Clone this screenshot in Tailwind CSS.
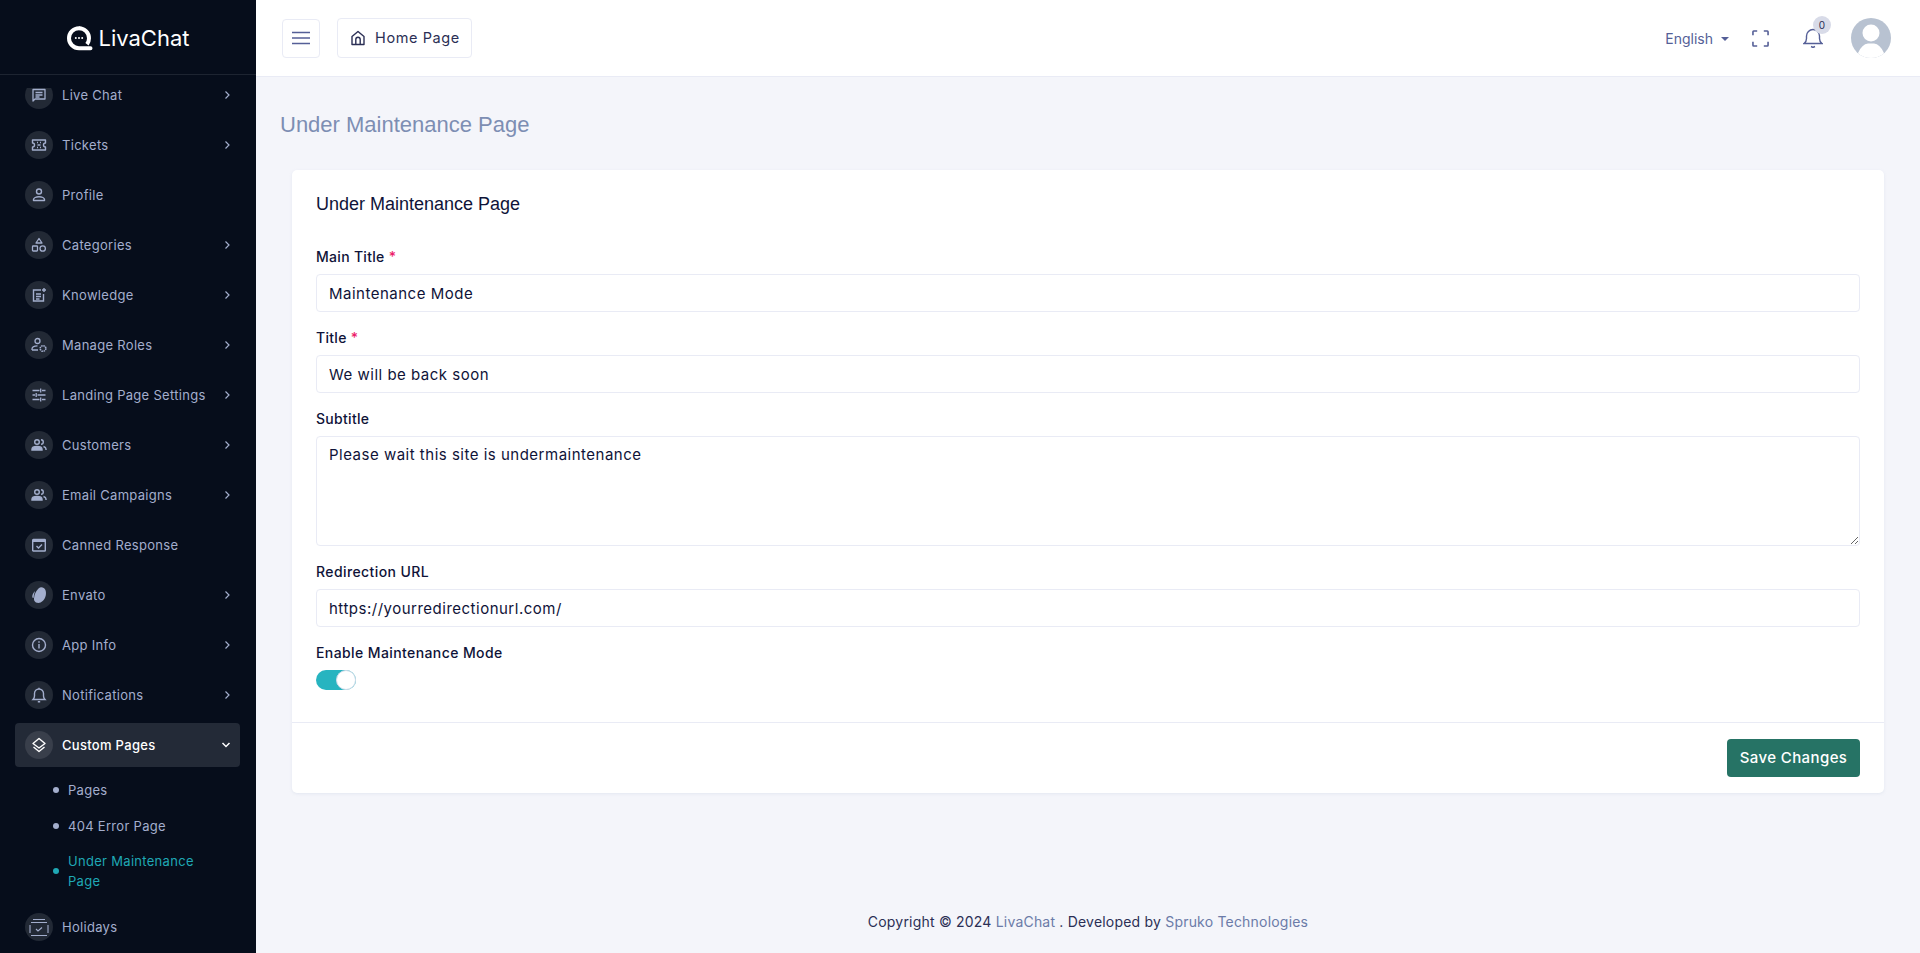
<!doctype html>
<html lang="en">
<head>
<meta charset="utf-8">
<title>Under Maintenance Page</title>
<script src="https://cdn.jsdelivr.net/npm/@tailwindcss/browser@4"></script>
</head>
<body class="font-['Inter',sans-serif] bg-[#f4f5fa] text-[#0f1338]">
<div class="flex h-[953px] w-[1920px] overflow-hidden">

  <aside class="flex h-full w-[256px] shrink-0 flex-col bg-[#060d1b]">
    <div class="flex h-[75px] shrink-0 items-center justify-center gap-[5px] border-b border-[#1d2431] pt-[2px] text-white">
      <svg width="27" height="27" viewBox="0 0 27 27"><path d="M13 3.2a10 10 0 1 0 0 20h11.5" fill="none" stroke="#fff" stroke-width="4" stroke-linecap="round"/><path d="M13 3.2a10 10 0 0 1 10 10 10 10 0 0 1-2 6" fill="none" stroke="#fff" stroke-width="4"/><circle cx="9.8" cy="13" r="1" fill="#fff"/><circle cx="13" cy="13" r="1" fill="#fff"/><circle cx="16.2" cy="13" r="1" fill="#fff"/></svg>
      <span class="text-[22px] font-normal">LivaChat</span>
    </div>
    <nav class="mt-[13px] flex min-h-0 flex-1 flex-col gap-[6px] overflow-hidden pl-[15px] pr-[16px] text-[13px] leading-none tracking-[0.3px] text-[#a3aecd]">
      <a class="-mt-[15px] flex h-[44px] shrink-0 items-center pl-[10px] pr-[9px]"><span class="mr-[9px] flex h-[28px] w-[28px] items-center justify-center rounded-full bg-[#222935]"><svg width="16" height="16" viewBox="0 0 16 16" fill="none" stroke="#a3aecd" stroke-width="1.3"><path d="M2 2.5h12v9.5H4l-2 2z" stroke-linejoin="round"/><path d="M4.5 5.5h7M4.5 8h7M4.5 10h4"/></svg></span><span class="flex-1">Live Chat</span><svg width="8" height="10" viewBox="0 0 8 10" fill="none" stroke="#a3aecd" stroke-width="1.2"><path d="M2.5 1.5L6 5l-3.500 3.500"/></svg></a>
      <a class="flex h-[44px] shrink-0 items-center pl-[10px] pr-[9px]"><span class="mr-[9px] flex h-[28px] w-[28px] items-center justify-center rounded-full bg-[#222935]"><svg width="16" height="16" viewBox="0 0 16 16" fill="none" stroke="#a3aecd" stroke-width="1.4"><path d="M1.500 3h13v3a2 2 0 0 0 0 4v3h-13v-3a2 2 0 0 0 0-4z" stroke-linejoin="round"/><path d="M6 5.500h1M9 5.500h1M6.500 8h3M6 10.500h1M9 10.500h1"/></svg></span><span class="flex-1">Tickets</span><svg width="8" height="10" viewBox="0 0 8 10" fill="none" stroke="#a3aecd" stroke-width="1.2"><path d="M2.5 1.5L6 5l-3.500 3.500"/></svg></a>
      <a class="flex h-[44px] shrink-0 items-center pl-[10px] pr-[9px]"><span class="mr-[9px] flex h-[28px] w-[28px] items-center justify-center rounded-full bg-[#222935]"><svg width="16" height="16" viewBox="0 0 16 16" fill="none" stroke="#a3aecd" stroke-width="1.4"><circle cx="8" cy="4.500" r="2.500"/><path d="M2.500 13.500v-1c0-1.500 2.500-2.800 5.500-2.800s5.500 1.300 5.500 2.800v1z" stroke-linejoin="round"/></svg></span><span class="flex-1">Profile</span></a>
      <a class="flex h-[44px] shrink-0 items-center pl-[10px] pr-[9px]"><span class="mr-[9px] flex h-[28px] w-[28px] items-center justify-center rounded-full bg-[#222935]"><svg width="16" height="16" viewBox="0 0 16 16" fill="none" stroke="#a3aecd" stroke-width="1.3"><path d="M8 1.500l3 4.500H5z" stroke-linejoin="round"/><rect x="1.500" y="9" width="5" height="5" rx=".7"/><circle cx="11.700" cy="11.500" r="2.700"/></svg></span><span class="flex-1">Categories</span><svg width="8" height="10" viewBox="0 0 8 10" fill="none" stroke="#a3aecd" stroke-width="1.2"><path d="M2.5 1.5L6 5l-3.500 3.500"/></svg></a>
      <a class="flex h-[44px] shrink-0 items-center pl-[10px] pr-[9px]"><span class="mr-[9px] flex h-[28px] w-[28px] items-center justify-center rounded-full bg-[#222935]"><svg width="16" height="16" viewBox="0 0 16 16" fill="none" stroke="#a3aecd" stroke-width="1.4"><path d="M10 3H2.500v11h10V7"/><path d="M5 7h5M5 9.500h5M5 12h3.500M13 1v4M11 3h4"/></svg></span><span class="flex-1">Knowledge</span><svg width="8" height="10" viewBox="0 0 8 10" fill="none" stroke="#a3aecd" stroke-width="1.2"><path d="M2.5 1.5L6 5l-3.500 3.500"/></svg></a>
      <a class="flex h-[44px] shrink-0 items-center pl-[10px] pr-[9px]"><span class="mr-[9px] flex h-[28px] w-[28px] items-center justify-center rounded-full bg-[#222935]"><svg width="16" height="16" viewBox="0 0 16 16" fill="none" stroke="#a3aecd" stroke-width="1.3"><circle cx="6.500" cy="4" r="2.500"/><path d="M1 13v-1c0-2 2.500-3.200 5.500-3.200M1 13h6"/><circle cx="12" cy="11.500" r="2.800" stroke-dasharray="1.500 .7" stroke-width="1.600"/></svg></span><span class="flex-1">Manage Roles</span><svg width="8" height="10" viewBox="0 0 8 10" fill="none" stroke="#a3aecd" stroke-width="1.2"><path d="M2.5 1.5L6 5l-3.500 3.500"/></svg></a>
      <a class="flex h-[44px] shrink-0 items-center pl-[10px] pr-[9px]"><span class="mr-[9px] flex h-[28px] w-[28px] items-center justify-center rounded-full bg-[#222935]"><svg width="16" height="16" viewBox="0 0 16 16" fill="none" stroke="#a3aecd" stroke-width="1.3"><path d="M1.500 3.500h7M11 3.500h3.500M9.700 1.500v4M1.500 8H4M6.500 8h8M5.200 6v4M1.500 12.500h7M11 12.500h3.500M9.700 10.500v4"/></svg></span><span class="flex-1">Landing Page Settings</span><svg width="8" height="10" viewBox="0 0 8 10" fill="none" stroke="#a3aecd" stroke-width="1.2"><path d="M2.5 1.5L6 5l-3.500 3.500"/></svg></a>
      <a class="flex h-[44px] shrink-0 items-center pl-[10px] pr-[9px]"><span class="mr-[9px] flex h-[28px] w-[28px] items-center justify-center rounded-full bg-[#222935]"><svg width="16" height="16" viewBox="0 0 16 16" fill="none" stroke="#a3aecd" stroke-width="1.400"><circle cx="6" cy="5" r="2.300"/><path d="M1 13v-.8C1 10.500 3 9.500 6 9.500s5 1 5 2.700v.8z" fill="#a3aecd"/><path d="M10 2.700a2.300 2.300 0 0 1 0 4.600M12.500 9.500c1.500.5 2.500 1.300 2.500 2.500v1"/></svg></span><span class="flex-1">Customers</span><svg width="8" height="10" viewBox="0 0 8 10" fill="none" stroke="#a3aecd" stroke-width="1.2"><path d="M2.5 1.5L6 5l-3.500 3.500"/></svg></a>
      <a class="flex h-[44px] shrink-0 items-center pl-[10px] pr-[9px]"><span class="mr-[9px] flex h-[28px] w-[28px] items-center justify-center rounded-full bg-[#222935]"><svg width="16" height="16" viewBox="0 0 16 16" fill="none" stroke="#a3aecd" stroke-width="1.400"><circle cx="6" cy="5" r="2.300"/><path d="M1 13v-.8C1 10.500 3 9.500 6 9.500s5 1 5 2.700v.8z" fill="#a3aecd"/><path d="M10 2.700a2.300 2.300 0 0 1 0 4.600M12.500 9.500c1.500.5 2.500 1.300 2.500 2.500v1"/></svg></span><span class="flex-1">Email Campaigns</span><svg width="8" height="10" viewBox="0 0 8 10" fill="none" stroke="#a3aecd" stroke-width="1.2"><path d="M2.5 1.5L6 5l-3.500 3.500"/></svg></a>
      <a class="flex h-[44px] shrink-0 items-center pl-[10px] pr-[9px]"><span class="mr-[9px] flex h-[28px] w-[28px] items-center justify-center rounded-full bg-[#222935]"><svg width="16" height="16" viewBox="0 0 16 16" fill="none" stroke="#a3aecd" stroke-width="1.400"><rect x="1.700" y="2.500" width="12.600" height="11.500" rx=".6"/><path d="M1.700 4h12.600" stroke-width="2"/><path d="M5.500 9l2 2 3.500-3.500"/></svg></span><span class="flex-1">Canned Response</span></a>
      <a class="flex h-[44px] shrink-0 items-center pl-[10px] pr-[9px]"><span class="mr-[9px] flex h-[28px] w-[28px] items-center justify-center rounded-full bg-[#222935]"><svg width="18" height="18" viewBox="0 0 16 16"><path d="M10 1c3.500 0 4.800 3.500 4 7.500C13 13 10 15 7.500 15 4 15 3 12.500 3.800 9.500 4.200 6 7 1.300 10 1zM4.500 4.500C2.800 6 1.800 8.200 2 10.200l1.200.5c.1-2 .5-4 1.300-6.200z" fill="#a3aecd"/></svg></span><span class="flex-1">Envato</span><svg width="8" height="10" viewBox="0 0 8 10" fill="none" stroke="#a3aecd" stroke-width="1.2"><path d="M2.5 1.5L6 5l-3.500 3.500"/></svg></a>
      <a class="flex h-[44px] shrink-0 items-center pl-[10px] pr-[9px]"><span class="mr-[9px] flex h-[28px] w-[28px] items-center justify-center rounded-full bg-[#222935]"><svg width="16" height="16" viewBox="0 0 16 16" fill="none" stroke="#a3aecd" stroke-width="1.400"><circle cx="8" cy="8" r="6.500"/><path d="M8 7v4.500M8 4.300v1.500"/></svg></span><span class="flex-1">App Info</span><svg width="8" height="10" viewBox="0 0 8 10" fill="none" stroke="#a3aecd" stroke-width="1.2"><path d="M2.5 1.5L6 5l-3.500 3.500"/></svg></a>
      <a class="flex h-[44px] shrink-0 items-center pl-[10px] pr-[9px]"><span class="mr-[9px] flex h-[28px] w-[28px] items-center justify-center rounded-full bg-[#222935]"><svg width="16" height="16" viewBox="0 0 16 16" fill="none" stroke="#a3aecd" stroke-width="1.400"><path d="M2 12.500h12c-1-1-1.500-2-1.500-3.500V6.500a4.500 4.500 0 0 0-9 0V9c0 1.500-.5 2.500-1.500 3.500zM6.800 14.700h2.400M8 .8v1"/></svg></span><span class="flex-1">Notifications</span><svg width="8" height="10" viewBox="0 0 8 10" fill="none" stroke="#a3aecd" stroke-width="1.2"><path d="M2.5 1.5L6 5l-3.500 3.500"/></svg></a>
      <a class="flex h-[44px] shrink-0 items-center rounded-[4px] bg-[#232a37] pl-[10px] pr-[9px] font-medium text-white"><span class="mr-[9px] flex h-[28px] w-[28px] items-center justify-center rounded-full bg-[#393f4b]"><svg width="16" height="16" viewBox="0 0 16 16" fill="none" stroke="#fff" stroke-width="1.400" stroke-linejoin="round"><path d="M8 1.500L14 6.500 8 11 2 6.500z"/><path d="M2.500 10L8 14.500 13.500 10"/></svg></span><span class="flex-1">Custom Pages</span><svg width="10" height="8" viewBox="0 0 10 8" fill="none" stroke="#fff" stroke-width="1.500"><path d="M1.500 2L5 5.500 8.500 2"/></svg></a>
      <ul class="-mt-[6px] mb-[6px] flex shrink-0 flex-col pl-[38px] pr-[30px] text-[13px]">
        <li class="flex h-[36px] items-center gap-[9px] pt-[10px]"><span class="h-[6px] w-[6px] shrink-0 rounded-full bg-[#a3aecd]"></span>Pages</li>
        <li class="flex h-[36px] items-center gap-[9px] pt-[10px]"><span class="h-[6px] w-[6px] shrink-0 rounded-full bg-[#a3aecd]"></span>404 Error Page</li>
        <li class="flex h-[54px] items-center gap-[9px] pt-[10px] leading-[20px] text-[#1fa8b5]"><span class="h-[6px] w-[6px] shrink-0 rounded-full bg-[#1fa8b5]"></span><span>Under Maintenance Page</span></li>
      </ul>
      <a class="flex h-[44px] shrink-0 items-center pl-[10px] pr-[9px]"><span class="mr-[9px] flex h-[28px] w-[28px] items-center justify-center rounded-full bg-[#222935]"><svg width="20" height="20" viewBox="0 0 20 20" fill="none" stroke="#a3aecd" stroke-width="1.100"><path d="M4 2.500h12M2 5.500h16M1 8v8M19 8v8M2 18.500h16"/><path d="M7 12l2 2 4-3.500"/></svg></span><span class="flex-1">Holidays</span></a>
    </nav>
  </aside>

  <div class="flex min-w-0 flex-1 flex-col">
    <header class="flex h-[77px] shrink-0 items-center border-b border-[#e9ebf5] bg-white pl-[26px] pr-[29px]">
      <button class="mr-[17px] flex h-[39px] w-[38px] items-center justify-center rounded-[4px] border border-[#e9ebf5]"><svg width="20" height="14" viewBox="0 0 20 14" fill="none" stroke="#555f97" stroke-width="1.500"><path d="M1 1.500h18M1 7h18M1 12.500h18"/></svg></button>
      <a class="flex h-[40px] w-[135px] items-center gap-[9px] rounded-[4px] border border-[#e9ebf5] pl-[12px] text-[14.500px] tracking-[0.6px] text-[#2b2f55]"><svg width="16" height="16" viewBox="0 0 16 16" fill="none" stroke="#2b2f55" stroke-width="1.400" stroke-linejoin="round"><path d="M2 6.500L8 1.500l6 5V14.500H2zM5.800 14.500V9.500a2.200 2.200 0 0 1 4.400 0v5"/></svg>Home Page</a>
      <div class="flex-1"></div>
      <div class="flex items-center gap-[8px] text-[14px] text-[#555f97]">English<span class="mt-[1px] h-0 w-0 border-x-[4px] border-t-[4px] border-x-transparent border-t-[#555f97]"></span></div>
      <svg class="ml-[23px]" width="17" height="17" viewBox="0 0 18 18" fill="none" stroke="#555f97" stroke-width="1.700"><path d="M1 5.500V1.800a.8.800 0 0 1 .8-.8H5.500M12.500 1h3.700a.8.800 0 0 1 .8.800V5.500M17 12.500v3.700a.8.800 0 0 1-.8.800H12.500M5.500 17H1.800a.8.800 0 0 1-.8-.8V12.500"/></svg>
      <div class="relative ml-[34px] h-[20px] w-[20px]">
        <svg width="20" height="20" viewBox="0 0 20 20" fill="none" stroke="#555f97" stroke-width="1.400"><path d="M1 15.500h18c-1.500-1-2.500-2.500-2.500-5V8a6.500 6.500 0 0 0-13 0v2.500c0 2.500-1 4-2.500 5zM8 18.500l2 1 2-1"/></svg>
        <span class="absolute left-[10px] top-[-12px] flex h-[18px] w-[18px] items-center justify-center rounded-full bg-[#d8dbe8] text-[10px] text-[#2b2f55]">0</span>
      </div>
      <span class="relative ml-[28px] h-[40px] w-[40px] overflow-hidden rounded-full bg-[#b8c2d1]"><svg width="40" height="40" viewBox="0 0 40 40"><circle cx="20" cy="15" r="8.500" fill="#fff"/><path d="M7 35Q11 26 17 25.500H23Q29 26 33 35L40 40H0Z" fill="#fff"/></svg></span>
    </header>

    <main class="flex min-h-0 flex-1 flex-col px-[36px]">
      <h1 class="ml-[-12px] mt-[33px] font-['Liberation_Sans',sans-serif] text-[22px] leading-[30px] text-[#7d8eb3]">Under Maintenance Page</h1>
      <section class="mt-[30px] h-[623px] w-[1592px] rounded-[5px] bg-white shadow-[0_1px_3px_rgba(180,190,215,0.25)]">
        <h2 class="px-[24px] pt-[22px] font-['Liberation_Sans',sans-serif] text-[18px] leading-[24px] text-[#0f1338]">Under Maintenance Page</h2>
        <form class="flex h-[506px] flex-col px-[24px] pt-[33px] text-[15px] tracking-[0.5px]">
          <label class="h-[25px] text-[14px] font-medium leading-[16px] tracking-[0.3px]">Main Title <span class="text-[#ec1c6b]">*</span></label>
          <input class="h-[38px] rounded-[4px] border border-[#e9ebf5] px-[12px] outline-none" value="Maintenance Mode">
          <label class="mt-[18px] h-[25px] text-[14px] font-medium leading-[16px] tracking-[0.3px]">Title <span class="text-[#ec1c6b]">*</span></label>
          <input class="h-[38px] rounded-[4px] border border-[#e9ebf5] px-[12px] outline-none" value="We will be back soon">
          <label class="mt-[18px] h-[25px] text-[14px] font-medium leading-[16px] tracking-[0.3px]">Subtitle</label>
          <textarea class="h-[110px] rounded-[4px] border border-[#e9ebf5] px-[12px] py-[7px] outline-none">Please wait this site is undermaintenance</textarea>
          <label class="mt-[18px] h-[25px] text-[14px] font-medium leading-[16px] tracking-[0.4px]">Redirection URL</label>
          <input class="h-[38px] rounded-[4px] border border-[#e9ebf5] px-[12px] outline-none" value="https://yourredirectionurl.com/">
          <label class="mt-[18px] h-[25px] text-[14px] font-medium leading-[16px] tracking-[0.4px]">Enable Maintenance Mode</label>
          <span class="flex h-[20px] w-[40px] items-center justify-end rounded-full bg-[#27b4c0]"><span class="h-[20px] w-[20px] rounded-full border border-[#cfdbe9] bg-white"></span></span>
        </form>
        <div class="flex justify-end border-t border-[#e9ebf5] px-[24px] pt-[16px]">
          <button class="h-[38px] w-[133px] rounded-[4px] bg-[#267365] text-[15px] font-medium tracking-[0.4px] text-white">Save Changes</button>
        </div>
      </section>
      <div class="flex-1"></div>
      <footer class="mb-[21px] text-center text-[14px] leading-[20px] tracking-[0.2px] text-[#2b2f55]">Copyright © 2024 <a class="text-[#6b7ba8]">LivaChat</a> . Developed by <a class="text-[#6b7ba8]">Spruko Technologies</a></footer>
    </main>
  </div>
</div>
</body>
</html>
